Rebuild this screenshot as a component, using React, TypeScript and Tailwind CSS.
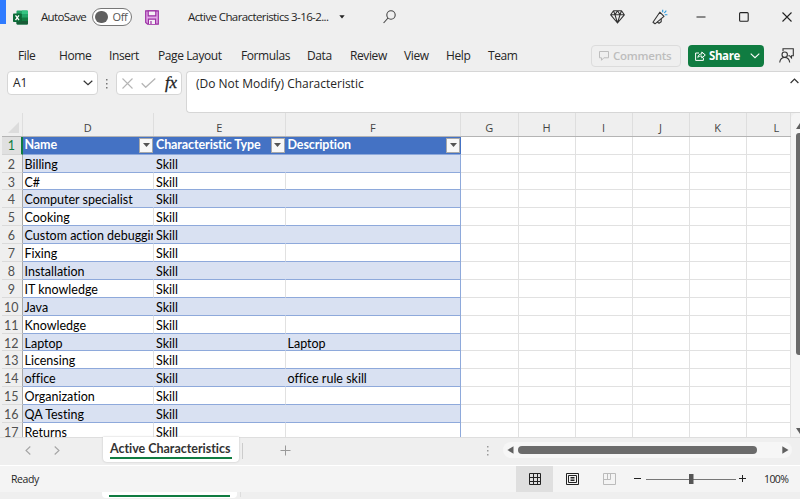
import React from "react";

const UI = "font-['Open_Sans','Noto_Sans',sans-serif]";
const CELL = "font-['Lato','Open_Sans',sans-serif] [font-variant-ligatures:none]";

const rows: [string, string][] = [
  ["Billing", ""],
  ["C#", ""],
  ["Computer specialist", ""],
  ["Cooking", ""],
  ["Custom action debugging", ""],
  ["Fixing", ""],
  ["Installation", ""],
  ["IT knowledge", ""],
  ["Java", ""],
  ["Knowledge", ""],
  ["Laptop", "Laptop"],
  ["Licensing", ""],
  ["office", "office rule skill"],
  ["Organization", ""],
  ["QA Testing", ""],
  ["Returns", ""],
];

const menu: [string, string][] = [
  ["File", "w-[41px]"],
  ["Home", "w-[50px]"],
  ["Insert", "w-[49px]"],
  ["Page Layout", "w-[83px]"],
  ["Formulas", "w-[66px]"],
  ["Data", "w-[43px]"],
  ["Review", "w-[54px]"],
  ["View", "w-[42px]"],
  ["Help", "w-[42px]"],
  ["Team", "w-[40px]"],
];

const columns: [string, string][] = [
  ["D", "w-[131.5px]"],
  ["E", "w-[131.5px]"],
  ["F", "w-[175.5px]"],
  ["G", "w-[57.5px]"],
  ["H", "w-[57px]"],
  ["I", "w-[57px]"],
  ["J", "w-[57px]"],
  ["K", "w-[57px]"],
  ["L", "w-[44.5px] pl-4"],
];

function ExcelLogo() {
  return (
    <svg width="15" height="15" viewBox="0 0 15 15" className="shrink-0">
      <rect x="3.5" y="0.5" width="11.5" height="14" rx="1" fill="#21a366" />
      <path d="M3.5 7.5H9V14.5H4.5a1 1 0 0 1-1-1z" fill="#185c37" />
      <path d="M3.5 4H9V7.5H3.5z" fill="#107c41" />
      <path d="M9 .5h5a1 1 0 0 1 1 1V4H9z" fill="#33c481" />
      <path d="M9 7.5h6V11H9z" fill="#107c41" />
      <path d="M9 11h6v2.5a1 1 0 0 1-1 1H9z" fill="#185c37" />
      <rect x="0" y="3.5" width="8.5" height="8.5" rx="0.8" fill="#0b6a37" />
      <path d="M2.5 5.4 6 10.2M6 5.4 2.5 10.2" stroke="#fff" strokeWidth="1.3" />
    </svg>
  );
}

function FilterButton() {
  return (
    <span className="flex h-[15px] w-[14px] shrink-0 items-center justify-center border border-[#a9a9a9] bg-[#f8f8f8]">
      <svg width="7" height="4" viewBox="0 0 7 4">
        <path d="M0 0h7L3.5 4z" fill="#555" />
      </svg>
    </span>
  );
}

function EmptyCells() {
  return (
    <>
      {columns.slice(3).map(([c, w]) => (
        <div key={c} className={`${w} h-full shrink-0 border-r border-b border-[#e1e1e1] bg-white`} />
      ))}
    </>
  );
}

function TitleBar() {
  return (
    <div className="flex h-[34px] shrink-0">
      <div className="h-[24px] w-[6px] bg-[#2f7bff]" />
      <div className="flex flex-1 items-center pl-[7px]">
        <ExcelLogo />
        <span className="ml-[13px] w-[51px] text-[11.5px] tracking-[-0.65px]">AutoSave</span>
        <div className="flex h-[18px] w-[40px] items-center rounded-full border border-[#777] bg-white pl-[2px]">
          <span className="size-[12.5px] shrink-0 rounded-full bg-[#606060]" />
          <span className="ml-[5px] text-[11px] tracking-[-0.4px] text-[#555]">Off</span>
        </div>
        <svg className="ml-[13px]" width="14" height="15" viewBox="0 0 14 15" fill="none" stroke="#9b2fa3" strokeWidth="1.2">
          <path d="M.7.8h12.6v13.4H2.6L.7 12.4z" fill="#e3a9e8" />
          <path d="M3.2.8h7.6v5H3.2z" fill="#f4f0f5" />
          <path d="M3.4 14V9.2h7.2V14" fill="#f4f0f5" />
          <path d="M6 11v3" />
        </svg>
        <span className="ml-[29px] w-[151px] text-[11.5px] tracking-[-0.6px] whitespace-nowrap">
          Active Characteristics 3-16-2...
        </span>
        <svg width="6" height="4" viewBox="0 0 6 4">
          <path d="M.3.3h5.4L3 3.4z" fill="#222" />
        </svg>
        <svg className="ml-[38px]" width="13" height="14" viewBox="0 0 13 14" fill="none" stroke="#444" strokeWidth="1.1">
          <circle cx="8" cy="5" r="4.2" />
          <path d="M5 8 .6 13" />
        </svg>
        <svg className="ml-[214px]" width="15" height="14" viewBox="0 0 15 14" fill="none" stroke="#333" strokeWidth="1.1" strokeLinejoin="round">
          <path d="M3.5.8h8L14.3 4.8 7.5 13 .7 4.8zM.7 4.8h13.6M3.5.8 5 4.8 7.5 13 10 4.8 11.5.8M5 4.8 7.5.8 10 4.8" />
        </svg>
        <svg className="ml-[27px]" width="16" height="16" viewBox="0 0 16 16" fill="none" stroke="#333" strokeWidth="1.1" strokeLinejoin="round">
          <path d="M7.8 3.2 12 7.3 3 14.8 1 13.2z" />
          <path d="m5.2 13 1.8 1.2 2.2-1.4V9.8" />
          <path d="M10.7 3.2V.8M12.3 4l2-2.4M12.8 5.8h2.6" stroke="#2898dc" />
        </svg>
        <svg className="ml-[28px]" width="10" height="10" viewBox="0 0 10 10">
          <path d="M.5 5h9" stroke="#222" strokeWidth="1" />
        </svg>
        <svg className="ml-[33px]" width="10" height="10" viewBox="0 0 10 10">
          <rect x=".6" y=".6" width="8.6" height="8.6" rx="1" fill="none" stroke="#222" strokeWidth="1.1" />
        </svg>
        <svg className="ml-[33px]" width="10" height="10" viewBox="0 0 10 10">
          <path d="m.5.5 9 9m0-9-9 9" stroke="#222" strokeWidth="1.1" />
        </svg>
      </div>
    </div>
  );
}

function MenuBar() {
  return (
    <div className="flex h-[37px] shrink-0 items-center pt-[6px] pl-[18px] text-[12px] tracking-[-0.4px]">
      {menu.map(([label, w]) => (
        <span key={label} className={`${w} shrink-0 pt-px whitespace-nowrap`}>
          {label}
        </span>
      ))}
      <div className="ml-[63px] flex h-[22px] w-[90px] shrink-0 items-center rounded-[4px] border border-[#dcdcdc] pl-[7px] text-[#bdbdbd]">
        <svg width="10" height="10" viewBox="0 0 10 10" fill="none" stroke="#bdbdbd">
          <path d="M.5.5h9v6.3H4.8L2.5 9.3V6.8h-2z" />
        </svg>
        <span className="ml-[4px] text-[11.5px] font-semibold tracking-[-0.25px]">Comments</span>
      </div>
      <div className="ml-[7px] flex h-[22px] w-[76px] shrink-0 items-center rounded-[4px] bg-[#107c41] pl-[7px] text-white">
        <svg width="11" height="11" viewBox="0 0 11 11" fill="none" stroke="#fff" strokeWidth="1">
          <path d="M4 3H.6v7.4h7.8V7.8" />
          <path d="M2.8 7.5C3.2 4.9 4.6 4 6.8 4V2l3.5 3-3.5 3V6C5 6 3.8 6.3 2.8 7.5z" />
        </svg>
        <span className="ml-[3px] w-[31px] text-[11.5px] font-bold tracking-[-0.4px]">Share</span>
        <svg className="ml-[10px]" width="10" height="6" viewBox="0 0 10 6" fill="none" stroke="#fff" strokeWidth="1.1">
          <path d="m.7.7 4.3 4L9.3.7" />
        </svg>
      </div>
      <svg className="ml-[15px] shrink-0" width="15" height="15" viewBox="0 0 15 15" fill="none" stroke="#333" strokeWidth="1.1">
        <path d="M4 3.2V.7h10.3v7h-1.8v2.1L10.5 7.7H9.3" />
        <circle cx="5.7" cy="6.7" r="2.7" />
        <path d="M.7 14.5c.4-3.2 2.2-5 5-5s4.6 1.8 5 5" />
      </svg>
    </div>
  );
}

function FormulaBar() {
  return (
    <div className="flex h-[42px] shrink-0 items-start pl-[7px] text-[12px]">
      <div className="flex h-[24px] w-[91px] items-center justify-between rounded-[4px] border border-[#d6d6d6] bg-white pr-[4px] pl-[5px]">
        <span>A1</span>
        <svg width="10" height="6" viewBox="0 0 10 6" fill="none" stroke="#333" strokeWidth="1.2">
          <path d="m.7.7 4.3 4L9.3.7" />
        </svg>
      </div>
      <svg className="mt-[8px] ml-[8px]" width="2" height="10" viewBox="0 0 2 10" fill="#777">
        <path d="M0 0h1.5v1.5H0zM0 4h1.5v1.5H0zM0 8h1.5v1.5H0z" />
      </svg>
      <div className="ml-[8px] flex h-[24px] w-[66px] items-center rounded-[4px] border border-[#d6d6d6] bg-white pl-[5px]">
        <svg width="11" height="11" viewBox="0 0 11 11" stroke="#b5b5b5" strokeWidth="1.1">
          <path d="m.5.5 10 10m0-10-10 10" />
        </svg>
        <svg className="ml-[8px]" width="15" height="10" viewBox="0 0 15 10" fill="none" stroke="#b5b5b5" strokeWidth="1.3">
          <path d="m.7 5.3 4 4L14.3.5" />
        </svg>
        <span className="ml-[9px] pb-px font-['Liberation_Serif',serif] text-[17px] tracking-[-0.3px] text-[#222] italic [-webkit-text-stroke:0.3px_#222]">
          fx
        </span>
      </div>
      <div className="ml-[4px] flex h-[41.5px] flex-1 items-start justify-between rounded-l-[4px] border border-r-0 border-[#d6d6d6] bg-white pt-[3px] pr-px pl-[9px]">
        <span className="tracking-[-0.01px]">(Do Not Modify) Characteristic</span>
        <svg className="mt-[3px]" width="9" height="6" viewBox="0 0 9 6" fill="none" stroke="#333" strokeWidth="1.2">
          <path d="m.6 5 3.9-4 3.9 4" />
        </svg>
      </div>
    </div>
  );
}

function Sheet() {
  return (
    <div className="flex h-[324px] shrink-0">
      <div className={`w-[790.5px] shrink-0 overflow-hidden pl-[2px] ${CELL}`}>
        <div className="flex h-[24px] border-b border-[#b4b4b4] text-[12px] text-[#444]">
          <div className="flex w-[20.5px] shrink-0 items-end justify-end border-r border-[#dedede] pr-[3px] pb-[3px]">
            <svg width="11" height="11" viewBox="0 0 11 11">
              <path d="M11 0v11H0z" fill="#dcdcdc" />
            </svg>
          </div>
          {columns.map(([c, w]) => (
            <div key={c} className={`${w} flex shrink-0 items-end justify-center border-r border-[#dedede]`}>
              <span className="font-['Open_Sans',sans-serif] text-[11px] leading-[16px]">{c}</span>
            </div>
          ))}
        </div>
        <div className="flex h-[17.7px] text-[12.5px] leading-[18px]">
          <div className="w-[20.5px] shrink-0 border-r-2 border-b border-r-[#107c41] border-b-[#d4d4d4] bg-[#e0e0e0] text-center text-[#107c41]">
            1
          </div>
          <div className="flex w-[438.5px] shrink-0 border-b border-[#8ea9db] bg-[#4472c4] font-bold text-white">
            <div className="flex w-[131.5px] items-center justify-between pr-px pl-[2px]">
              <span className="tracking-[-0.1px]">Name</span>
              <FilterButton />
            </div>
            <div className="flex w-[131.5px] items-center justify-between pr-px pl-[2px] whitespace-nowrap">
              <span className="tracking-[-0.1px]">Characteristic Type</span>
              <FilterButton />
            </div>
            <div className="flex w-[175.5px] items-center justify-between pr-px pl-[2px]">
              <span className="tracking-[-0.1px]">Description</span>
              <FilterButton />
            </div>
          </div>
          <EmptyCells />
        </div>
        {rows.map(([name, desc], i) => {
          const shade = i % 2 === 0 ? "bg-[#d9e1f2] border-r-transparent" : "bg-white border-r-[#e1e1e1]";
          return (
            <div key={name} className="flex h-[17.9px] text-[12.5px] leading-[19px] text-black">
              <div className="w-[20.5px] shrink-0 border-r border-b border-r-[#a8a8a8] border-b-[#dadada] pr-px text-center text-[#505050]">
                {i + 2}
              </div>
              <div className={`${shade} w-[131.5px] shrink-0 overflow-hidden border-r border-b border-b-[#8ea9db] pl-[2px] whitespace-nowrap`}>
                {name}
              </div>
              <div className={`${shade} w-[131.5px] shrink-0 border-r border-b border-b-[#8ea9db] pl-[2px]`}>Skill</div>
              <div className={`${i % 2 === 0 ? "bg-[#d9e1f2]" : "bg-white"} w-[175.5px] shrink-0 border-r border-b border-[#8ea9db] pl-[2px]`}>
                {desc}
              </div>
              <EmptyCells />
            </div>
          );
        })}
      </div>
      <div className="flex flex-1 flex-col items-end overflow-hidden rounded-tl-[6px] bg-[#f5f5f5] pt-[10px]">
        <svg width="4" height="6" viewBox="0 0 4 6">
          <path d="M0 6 4 0v6z" fill="#606060" />
        </svg>
        <div className="mt-[4px] h-[222px] w-[4px] rounded-l-[3px] bg-[#6b6b6b]" />
        <svg className="mt-[73px]" width="4" height="6" viewBox="0 0 4 6">
          <path d="M0 0h4v6z" fill="#606060" />
        </svg>
      </div>
    </div>
  );
}

function SheetTabs() {
  return (
    <div className="flex h-[28px] shrink-0 border-t border-[#dedede] pl-[25px]">
      <svg className="mt-[8px]" width="6" height="9" viewBox="0 0 6 9" fill="none" stroke="#a5a5a5" strokeWidth="1.1">
        <path d="M5.3.5 1 4.5l4.3 4" />
      </svg>
      <svg className="mt-[8px] ml-[23px]" width="6" height="9" viewBox="0 0 6 9" fill="none" stroke="#a5a5a5" strokeWidth="1.1">
        <path d="M.7.5 5 4.5l-4.3 4" />
      </svg>
      <div className="-mt-px ml-[43px] h-[25px] w-[136px] rounded-b-[4px] bg-white px-[7px] pt-[4px] shadow-[0_0_2px_#bbb]">
        <div className={`h-[18px] border-b-2 border-[#107c41] text-[12.5px] leading-[15px] font-bold tracking-[-0.03px] whitespace-nowrap text-[#333] ${CELL}`}>
          Active Characteristics
        </div>
      </div>
      <div className="mt-[5px] ml-[3px] h-[16px] w-px bg-[#ccc]" />
      <svg className="mt-[7px] ml-[37px]" width="11" height="11" viewBox="0 0 11 11">
        <path d="M5.5.5v10M.5 5.5h10" stroke="#999" />
      </svg>
      <svg className="mt-[8px] ml-[196px]" width="2" height="10" viewBox="0 0 2 10" fill="#999">
        <path d="M0 0h1.5v1.5H0zM0 4h1.5v1.5H0zM0 8h1.5v1.5H0z" />
      </svg>
      <div className="mt-[4px] ml-[14px] flex h-[16px] w-[289px] items-center rounded-full bg-[#f6f6f6] pl-[4px]">
        <svg width="7" height="8" viewBox="0 0 7 8">
          <path d="M6.5.3v7.4L.3 4z" fill="#606060" />
        </svg>
        <div className="ml-[4px] h-[8px] w-[239px] rounded-full bg-[#6b6b6b]" />
        <svg className="ml-[25px]" width="7" height="8" viewBox="0 0 7 8">
          <path d="M.3.3v7.4L6.5 4z" fill="#606060" />
        </svg>
      </div>
    </div>
  );
}

function StatusBar() {
  return (
    <div className="flex h-[27px] shrink-0 items-center border-t border-white bg-[#f4f4f4] pl-[11px]">
      <span className="w-[505px] pt-px text-[10.5px] tracking-[-0.4px]">Ready</span>
      <div className="flex h-full w-[37px] items-center justify-center bg-[#dfdfdf]">
        <svg width="12" height="12" viewBox="0 0 12 12" fill="none" stroke="#222" strokeWidth="1">
          <path d="M.5.5h11v11H.5zM4.5.5v11M8.5.5v11M.5 4.5h11M.5 8.5h11" />
        </svg>
      </div>
      <svg className="ml-[13px]" width="13" height="12" viewBox="0 0 13 12" fill="none" stroke="#222" strokeWidth="1">
        <path d="M.5.5h12v11H.5zM2.5 2.5h8v7h-8zM4.5 4.5h4M4.5 6h4M4.5 7.5h4" />
      </svg>
      <svg className="ml-[24px]" width="13" height="12" viewBox="0 0 13 12" fill="none" stroke="#bbb" strokeWidth="1">
        <path d="M.5.5h12v11H.5zM.5 6.5h7M7.5 6.5v-6M4.5.5v6" />
      </svg>
      <svg className="ml-[17px]" width="114" height="12" viewBox="0 0 114 12" fill="none" stroke="#444" strokeWidth="1">
        <path d="M1 5.5h7M106 5.5h7M109.5 2v7" stroke="#222" />
        <path d="M13 6.5h90" stroke="#777" />
        <path d="M56 1h4.5v10H56z" fill="#555" stroke="none" />
      </svg>
      <span className="ml-[17px] pt-px text-[10.5px] tracking-[-0.6px]">100%</span>
    </div>
  );
}

export default function App() {
  return (
    <div className={`flex h-[499px] w-[800px] flex-col overflow-hidden bg-[#efefef] text-[#252525] ${UI}`}>
      <TitleBar />
      <MenuBar />
      <FormulaBar />
      <Sheet />
      <SheetTabs />
      <StatusBar />
      <div className="flex h-[7px] shrink-0 pl-[102px]">
        <div className="h-[6px] w-[135px] rounded-b-[4px] bg-white px-[7px] pt-[3px]">
          <div className="h-[2px] bg-[#107c41]" />
        </div>
        <div className="ml-[3px] h-[5px] w-px bg-[#ddd]" />
      </div>
    </div>
  );
}
